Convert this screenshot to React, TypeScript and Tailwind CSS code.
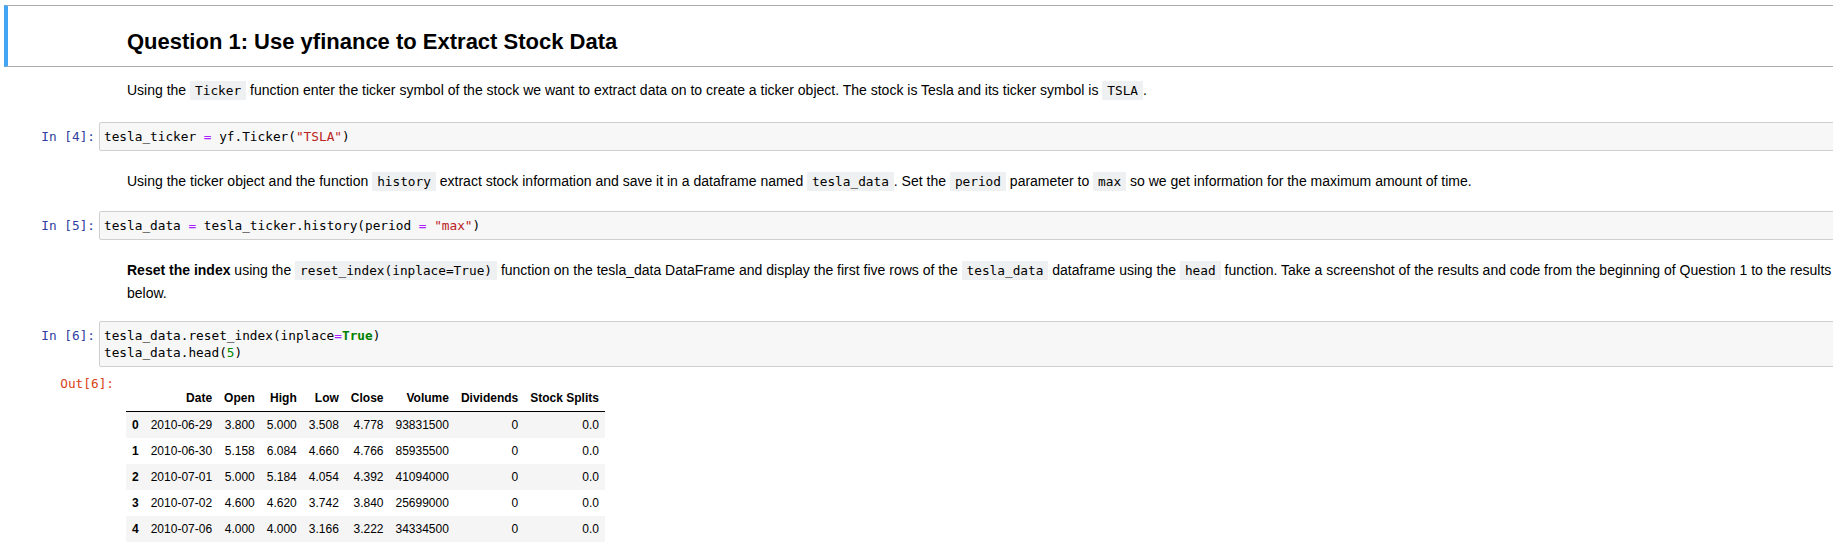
import React from "react";

const MONO = "font-['DejaVu_Sans_Mono',monospace]";

function C({ children }: { children: React.ReactNode }) {
  return (
    <code className={`${MONO} bg-[#eff0f1] px-[5px] py-[2px] text-[12.75px] text-black`}>
      {children}
    </code>
  );
}

function InPrompt({ n }: { n: number }) {
  return (
    <div
      className={`${MONO} w-[99px] shrink-0 pr-[4px] pt-[6px] text-right text-[12.75px] leading-[17px] text-[#303f9f] whitespace-pre`}
    >
      {`In [${n}]:`}
    </div>
  );
}

function CodeBox({ children }: { children: React.ReactNode }) {
  return (
    <div
      className={`${MONO} flex-1 rounded-[2px] border border-[#cfcfcf] bg-[#f7f7f7] px-[4px] py-[5px] text-[12.75px] leading-[17px] text-black whitespace-pre`}
    >
      {children}
    </div>
  );
}

const Op = ({ children }: { children: React.ReactNode }) => (
  <span className="text-[#aa22ff]">{children}</span>
);
const Str = ({ children }: { children: React.ReactNode }) => (
  <span className="text-[#ba2121]">{children}</span>
);

const rows = [
  ["0", "2010-06-29", "3.800", "5.000", "3.508", "4.778", "93831500", "0", "0.0"],
  ["1", "2010-06-30", "5.158", "6.084", "4.660", "4.766", "85935500", "0", "0.0"],
  ["2", "2010-07-01", "5.000", "5.184", "4.054", "4.392", "41094000", "0", "0.0"],
  ["3", "2010-07-02", "4.600", "4.620", "3.742", "3.840", "25699000", "0", "0.0"],
  ["4", "2010-07-06", "4.000", "4.000", "3.166", "3.222", "34334500", "0", "0.0"],
];
const headers = ["", "Date", "Open", "High", "Low", "Close", "Volume", "Dividends", "Stock Splits"];

export default function App() {
  return (
    <div className="h-[555px] w-[1833px] overflow-hidden bg-white font-['Liberation_Sans',Arial,sans-serif] text-black">
      <div className="w-[1870px] pt-[5px]">
        {/* Selected heading cell */}
        <div className="ml-[4px] h-[62px] border-y border-l-4 border-y-[#ababab] border-l-[#42a5f5] pl-[119px] pt-[22px]">
          <h2 className="text-[22px] font-bold leading-[28px]">
            Question 1: Use yfinance to Extract Stock Data
          </h2>
        </div>

        {/* Markdown 1 */}
        <div className="mt-[12px] pl-[127px] text-[14px] leading-[22px] whitespace-nowrap">
          Using the <C>Ticker</C> function enter the ticker symbol of the stock we want to extract data on to create a ticker object. The stock is Tesla and its ticker symbol is <C>TSLA</C>.
        </div>

        {/* Code 1 */}
        <div className="mt-[20px] flex">
          <InPrompt n={4} />
          <CodeBox>
            <div>
              tesla_ticker <Op>=</Op> yf.Ticker(<Str>"TSLA"</Str>)
            </div>
          </CodeBox>
        </div>

        {/* Markdown 2 */}
        <div className="mt-[19px] pl-[127px] text-[14px] leading-[22px] whitespace-nowrap">
          Using the ticker object and the function <C>history</C> extract stock information and save it in a dataframe named <C>tesla_data</C>. Set the <C>period</C> parameter to <C>max</C> so we get information for the maximum amount of time.
        </div>

        {/* Code 2 */}
        <div className="mt-[18px] flex">
          <InPrompt n={5} />
          <CodeBox>
            <div>
              tesla_data <Op>=</Op> tesla_ticker.history(period <Op>=</Op> <Str>"max"</Str>)
            </div>
          </CodeBox>
        </div>

        {/* Markdown 3 */}
        <div className="mt-[19px] pl-[127px] text-[14px] leading-[22px] whitespace-nowrap">
          <div>
            <strong className="font-bold">Reset the index</strong> using the <C>reset_index(inplace=True)</C> function on the tesla_data DataFrame and display the first five rows of the <C>tesla_data</C> dataframe using the <C>head</C> function. Take a screenshot of the results and code from the beginning of Question 1 to the results
          </div>
          <div>below.</div>
        </div>

        {/* Code 3 */}
        <div className="mt-[17px] flex">
          <InPrompt n={6} />
          <CodeBox>
            <div>
              <span>tesla_data.reset_index(inplace</span>
              <Op>=</Op>
              <span className="font-bold text-[#008000]">True</span>
              <span>)</span>
            </div>
            <div>
              <span>tesla_data.head(</span>
              <span className="text-[#008800]">5</span>
              <span>)</span>
            </div>
          </CodeBox>
        </div>

        {/* Output */}
        <div className="mt-[8px] flex">
          <div
            className={`${MONO} w-[120px] shrink-0 pr-[6px] text-right text-[12.75px] leading-[17px] text-[#d84315] whitespace-pre`}
          >
            Out[6]:
          </div>
          <div className="ml-[6px] pt-[10px]">
            <table className="border-collapse text-[12px] leading-[14px]">
              <thead>
                <tr className="border-b border-black">
                  {headers.map((h, i) => (
                    <th key={i} className="px-[6px] py-[6px] text-right font-bold whitespace-nowrap">
                      {h}
                    </th>
                  ))}
                </tr>
              </thead>
              <tbody>
                {rows.map((r, ri) => (
                  <tr key={ri} className={ri % 2 === 0 ? "bg-[#f5f5f5]" : "bg-white"}>
                    {r.map((c, ci) =>
                      ci === 0 ? (
                        <th key={ci} className="px-[6px] py-[6px] text-right font-bold">
                          {c}
                        </th>
                      ) : (
                        <td key={ci} className="px-[6px] py-[6px] text-right whitespace-nowrap">
                          {c}
                        </td>
                      )
                    )}
                  </tr>
                ))}
              </tbody>
            </table>
          </div>
        </div>
      </div>
    </div>
  );
}
